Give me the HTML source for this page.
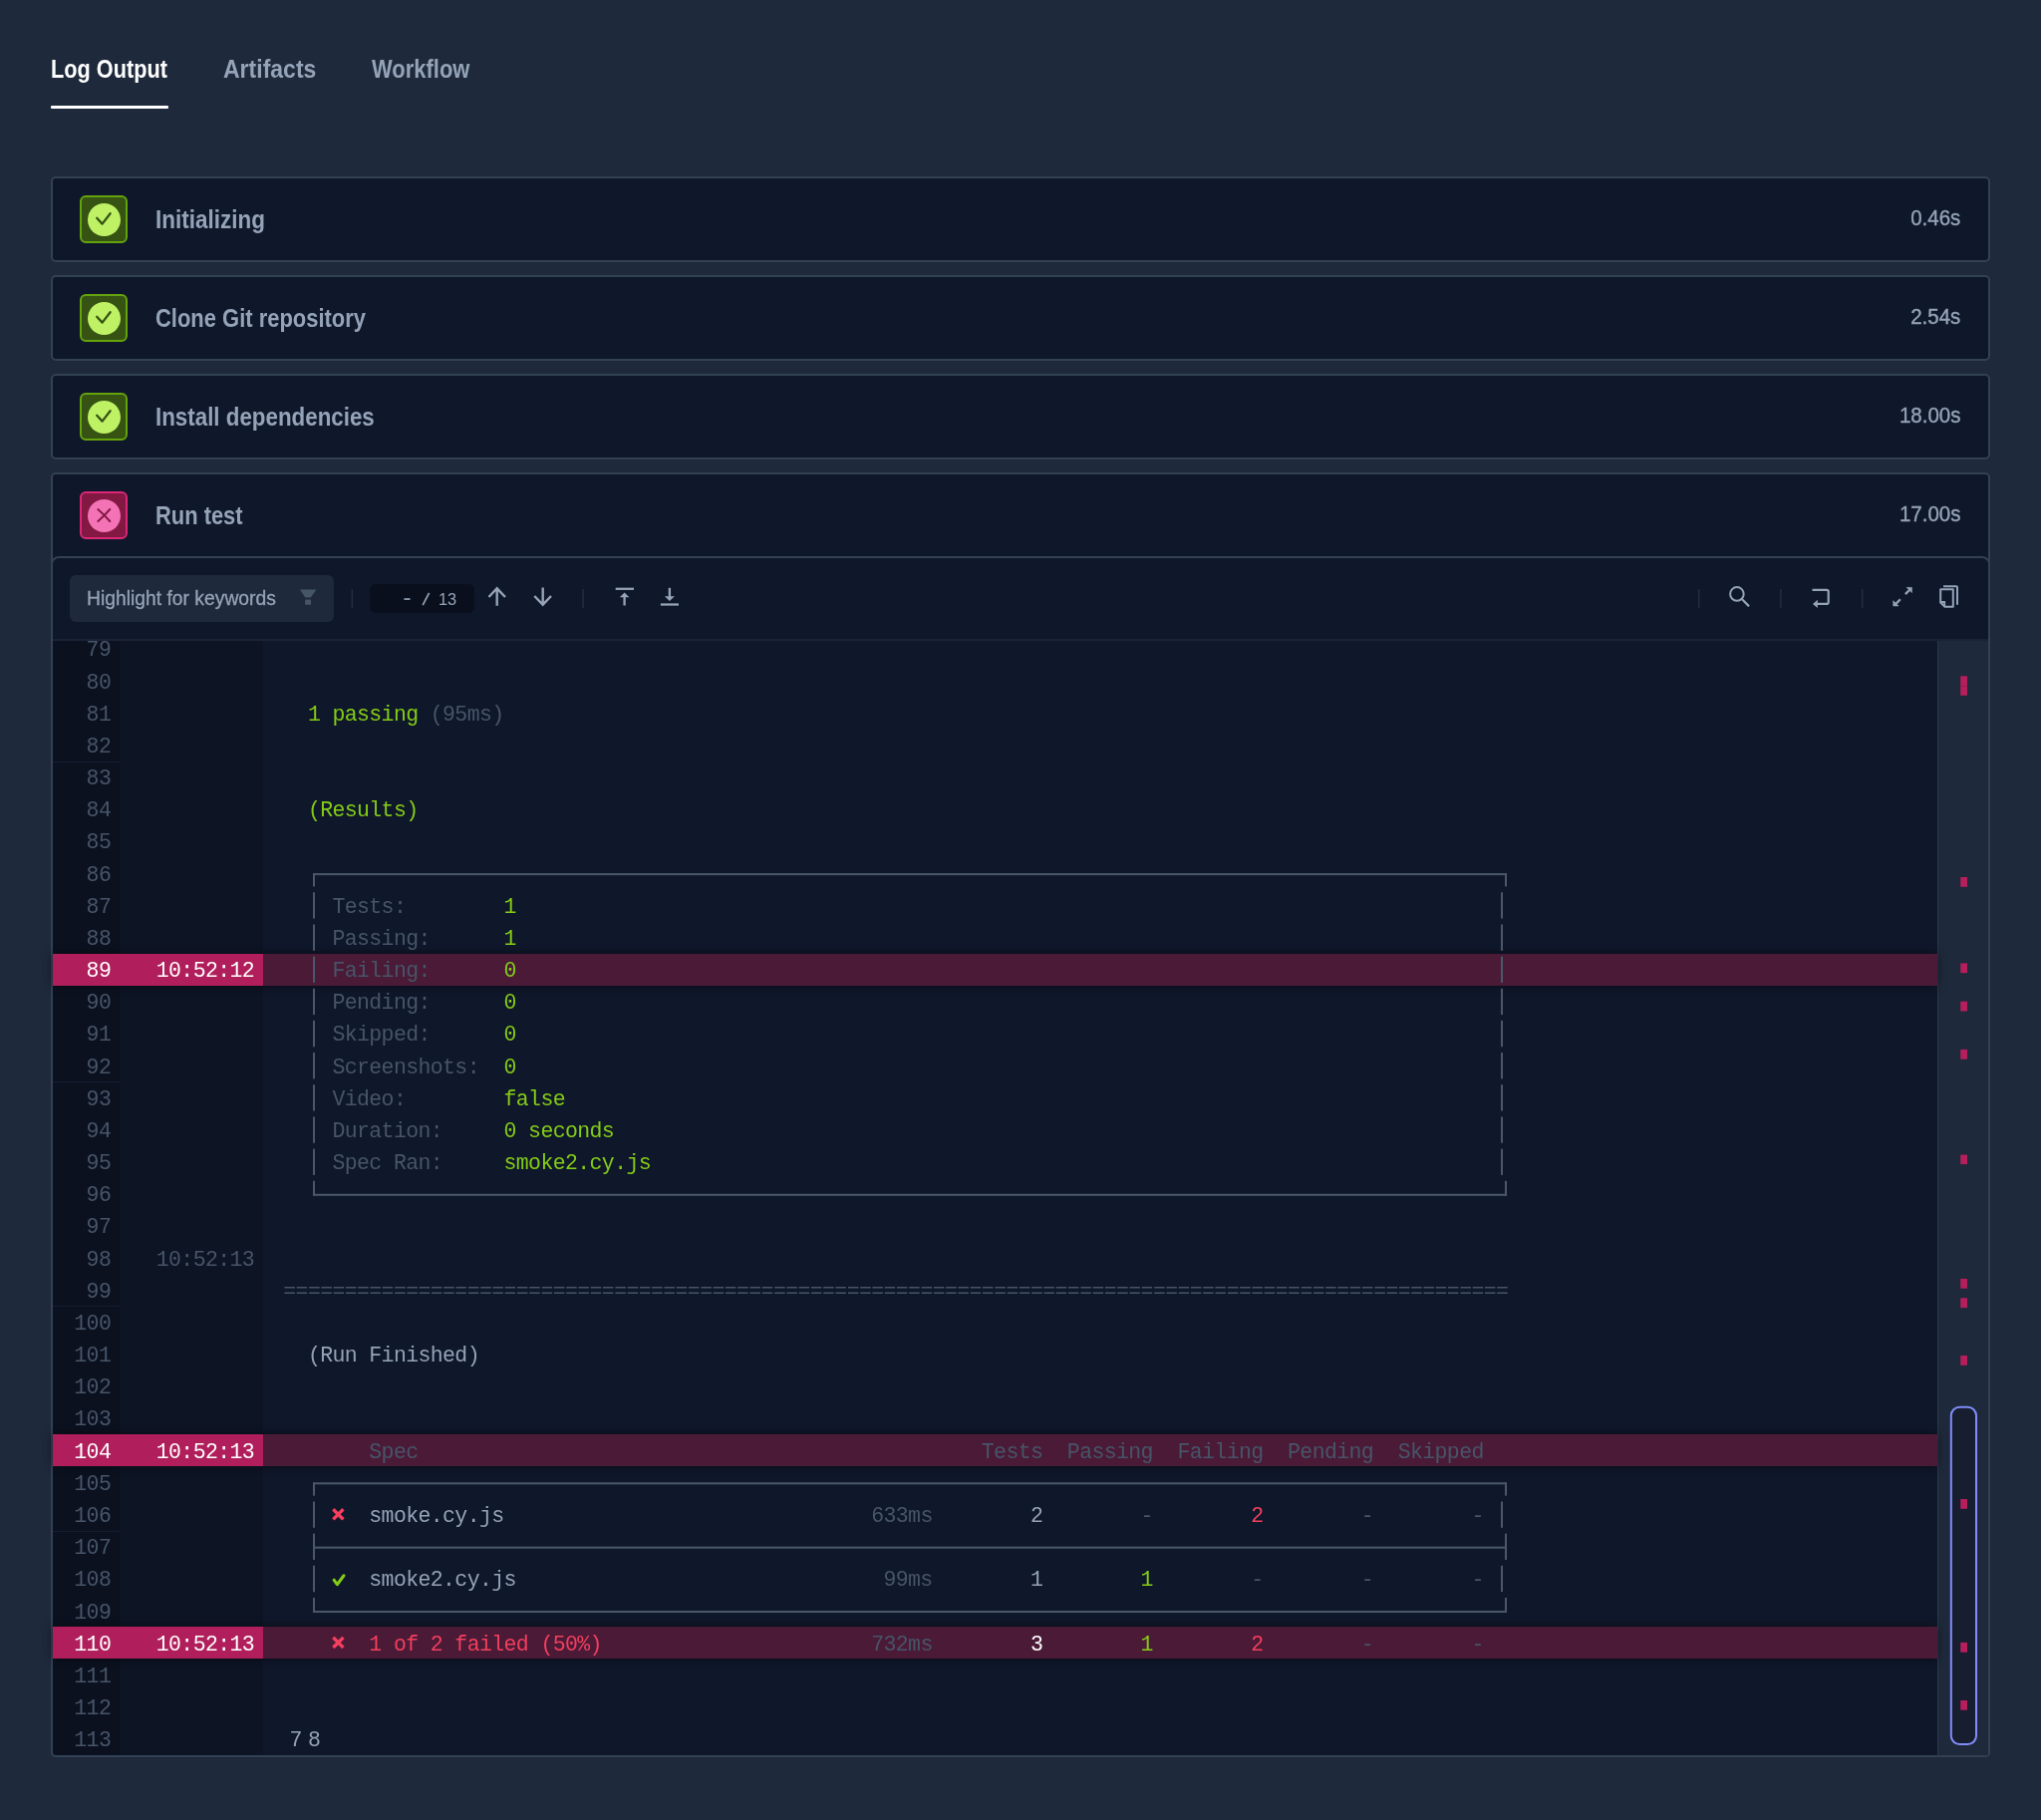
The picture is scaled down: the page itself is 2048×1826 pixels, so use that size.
<!DOCTYPE html>
<html><head><meta charset="utf-8"><title>Log Output</title>
<style>
*{box-sizing:border-box;margin:0;padding:0}
html,body{width:2048px;height:1826px;overflow:hidden;background:#1e293b}
body{position:relative;font-family:"Liberation Sans",sans-serif}
.a{position:absolute}
.tab{position:absolute;top:54px;font-weight:bold;font-size:26px;line-height:30px;white-space:nowrap;transform-origin:0 0}
.panel{position:absolute;left:51px;width:1946px;background:#0f172a;border:2px solid #334155;border-radius:5px}
.ibox{position:absolute;left:27px;top:17px;width:48px;height:48px;border-radius:6px;border:2px solid}
.ok{background:#365314;border-color:#65a30d}
.ok .circ{background:#bef264}
.bad{background:#831843;border-color:#db2777}
.bad .circ{background:#f472b6}
.circ{position:absolute;left:5.7px;top:5.5px;width:33px;height:33px;border-radius:50%}
.title{position:absolute;left:103px;font-weight:bold;font-size:25.4px;line-height:30px;color:#94a3b8;white-space:nowrap;transform-origin:0 0}
.dur{position:absolute;right:27.5px;font-size:21.8px;line-height:26px;color:#94a3b8;-webkit-text-stroke:0.4px #94a3b8;white-space:nowrap;transform-origin:100% 0}
.m{position:absolute;white-space:pre;font-family:"Liberation Mono",monospace;font-size:21.5px;line-height:32.17px;letter-spacing:-0.6119px}
.num{position:absolute;white-space:pre;font-family:"Liberation Mono",monospace;font-size:21.5px;line-height:32.17px;letter-spacing:-0.6119px;text-align:right}
</style></head>
<body>
<div style="position:absolute;left:0;top:0;width:2048px;height:1826px;will-change:transform">
<div class="tab" style="left:51px;color:#ffffff;transform:scaleX(0.835)">Log Output</div>
<div class="a" style="left:51px;top:106px;width:118px;height:3px;background:#ffffff;border-radius:1px"></div>
<div class="tab" style="left:224px;color:#94a3b8;transform:scaleX(0.885)">Artifacts</div>
<div class="tab" style="left:372.5px;color:#94a3b8;transform:scaleX(0.845)">Workflow</div>
<div class="panel" style="top:177px;height:86px">
<div class="ibox ok"><div class="circ"></div><svg class="a" style="left:0;top:0" width="44" height="44" viewBox="0 0 44 44"><path d="M15.2 20.8 L20.6 26.6 L28.6 16.2" fill="none" stroke="#365314" stroke-width="2.3" stroke-linecap="round" stroke-linejoin="round"/></svg></div>
<div class="title" style="top:26px;transform:scaleX(0.885)">Initializing</div>
<div class="dur" style="top:27px;transform:scaleX(0.94)">0.46s</div>
</div>
<div class="panel" style="top:276px;height:86px">
<div class="ibox ok"><div class="circ"></div><svg class="a" style="left:0;top:0" width="44" height="44" viewBox="0 0 44 44"><path d="M15.2 20.8 L20.6 26.6 L28.6 16.2" fill="none" stroke="#365314" stroke-width="2.3" stroke-linecap="round" stroke-linejoin="round"/></svg></div>
<div class="title" style="top:26px;transform:scaleX(0.8645)">Clone Git repository</div>
<div class="dur" style="top:27px;transform:scaleX(0.94)">2.54s</div>
</div>
<div class="panel" style="top:375px;height:86px">
<div class="ibox ok"><div class="circ"></div><svg class="a" style="left:0;top:0" width="44" height="44" viewBox="0 0 44 44"><path d="M15.2 20.8 L20.6 26.6 L28.6 16.2" fill="none" stroke="#365314" stroke-width="2.3" stroke-linecap="round" stroke-linejoin="round"/></svg></div>
<div class="title" style="top:26px;transform:scaleX(0.88)">Install dependencies</div>
<div class="dur" style="top:27px;transform:scaleX(0.94)">18.00s</div>
</div>
<div class="panel" style="top:474px;height:1289px">
<div class="ibox bad"><div class="circ"></div><svg class="a" style="left:0;top:0" width="44" height="44" viewBox="0 0 44 44"><path d="M16.3 16 Q22.3 21.2 28.3 28 M28.3 16 Q22.3 22.8 16.3 28" fill="none" stroke="#831843" stroke-width="1.9" stroke-linecap="round"/></svg></div>
<div class="title" style="top:26px;transform:scaleX(0.862)">Run test</div>
<div class="dur" style="top:27px;transform:scaleX(0.94)">17.00s</div>
</div>
<div class="a" style="left:51px;top:558px;width:1946px;height:1205px;border:2px solid #334155;border-radius:8px 8px 5px 5px;background:#0f172a;overflow:hidden">
</div>
<div class="a" style="left:53px;top:641px;width:1942px;height:2px;background:#1a2335"></div>
<div class="a" style="left:53px;top:643px;width:67px;height:1118px;background:#0b111f;border-radius:0 0 0 4px"></div>
<div class="a" style="left:120px;top:643px;width:144px;height:1118px;background:#0d1424"></div>
<div class="a" style="left:1944px;top:643px;width:51px;height:1118px;background:#1e293b;border-left:1px solid #2b3649;border-radius:0 0 4px 0"></div>
<div class="a" style="left:53px;top:763.58px;width:67px;height:1px;background:#161d31"></div>
<div class="a" style="left:53px;top:1085.28px;width:67px;height:1px;background:#161d31"></div>
<div class="a" style="left:53px;top:1310.47px;width:67px;height:1px;background:#161d31"></div>
<div class="a" style="left:53px;top:1535.66px;width:67px;height:1px;background:#161d31"></div>
<div class="a" style="left:53px;top:956.60px;width:1891px;height:32.17px;background:#4a1a37;box-shadow:0 0 10px rgba(0,0,0,0.5)"></div>
<div class="a" style="left:53px;top:1439.15px;width:1891px;height:32.17px;background:#4a1a37;box-shadow:0 0 10px rgba(0,0,0,0.5)"></div>
<div class="a" style="left:53px;top:1632.17px;width:1891px;height:32.17px;background:#4a1a37;box-shadow:0 0 10px rgba(0,0,0,0.5)"></div>
<div class="a" style="left:53px;top:956.60px;width:211px;height:32.17px;background:#b01f5b"></div>
<div class="a" style="left:264px;top:956.60px;width:1680px;height:32.17px;background:#4a1a37"></div>
<div class="a" style="left:53px;top:1439.15px;width:211px;height:32.17px;background:#b01f5b"></div>
<div class="a" style="left:264px;top:1439.15px;width:1680px;height:32.17px;background:#4a1a37"></div>
<div class="a" style="left:53px;top:1632.17px;width:211px;height:32.17px;background:#b01f5b"></div>
<div class="a" style="left:264px;top:1632.17px;width:1680px;height:32.17px;background:#4a1a37"></div>
<div class="a" style="left:53px;top:642px;width:1891px;height:1119px;overflow:hidden;will-change:transform">
<div class="num" style="left:0px;width:58.20px;top:-5.60px;color:#475569">79</div>
<div class="num" style="left:0px;width:58.20px;top:26.57px;color:#475569">80</div>
<div class="num" style="left:0px;width:58.20px;top:58.74px;color:#475569">81</div>
<div class="num" style="left:0px;width:58.20px;top:90.91px;color:#475569">82</div>
<div class="num" style="left:0px;width:58.20px;top:123.08px;color:#475569">83</div>
<div class="num" style="left:0px;width:58.20px;top:155.25px;color:#475569">84</div>
<div class="num" style="left:0px;width:58.20px;top:187.42px;color:#475569">85</div>
<div class="num" style="left:0px;width:58.20px;top:219.59px;color:#475569">86</div>
<div class="num" style="left:0px;width:58.20px;top:251.76px;color:#475569">87</div>
<div class="num" style="left:0px;width:58.20px;top:283.93px;color:#475569">88</div>
<div class="num" style="left:0px;width:58.20px;top:316.10px;color:#ffffff">89</div>
<div class="num" style="left:0px;width:58.20px;top:348.27px;color:#475569">90</div>
<div class="num" style="left:0px;width:58.20px;top:380.44px;color:#475569">91</div>
<div class="num" style="left:0px;width:58.20px;top:412.61px;color:#475569">92</div>
<div class="num" style="left:0px;width:58.20px;top:444.78px;color:#475569">93</div>
<div class="num" style="left:0px;width:58.20px;top:476.95px;color:#475569">94</div>
<div class="num" style="left:0px;width:58.20px;top:509.12px;color:#475569">95</div>
<div class="num" style="left:0px;width:58.20px;top:541.29px;color:#475569">96</div>
<div class="num" style="left:0px;width:58.20px;top:573.46px;color:#475569">97</div>
<div class="num" style="left:0px;width:58.20px;top:605.63px;color:#475569">98</div>
<div class="num" style="left:0px;width:58.20px;top:637.80px;color:#475569">99</div>
<div class="num" style="left:0px;width:58.20px;top:669.97px;color:#475569">100</div>
<div class="num" style="left:0px;width:58.20px;top:702.14px;color:#475569">101</div>
<div class="num" style="left:0px;width:58.20px;top:734.31px;color:#475569">102</div>
<div class="num" style="left:0px;width:58.20px;top:766.48px;color:#475569">103</div>
<div class="num" style="left:0px;width:58.20px;top:798.65px;color:#ffffff">104</div>
<div class="num" style="left:0px;width:58.20px;top:830.82px;color:#475569">105</div>
<div class="num" style="left:0px;width:58.20px;top:862.99px;color:#475569">106</div>
<div class="num" style="left:0px;width:58.20px;top:895.16px;color:#475569">107</div>
<div class="num" style="left:0px;width:58.20px;top:927.33px;color:#475569">108</div>
<div class="num" style="left:0px;width:58.20px;top:959.50px;color:#475569">109</div>
<div class="num" style="left:0px;width:58.20px;top:991.67px;color:#ffffff">110</div>
<div class="num" style="left:0px;width:58.20px;top:1023.84px;color:#475569">111</div>
<div class="num" style="left:0px;width:58.20px;top:1056.01px;color:#475569">112</div>
<div class="num" style="left:0px;width:58.20px;top:1088.18px;color:#475569">113</div>
<div class="num" style="left:0px;width:202.10px;top:316.10px;color:#ffffff">10:52:12</div>
<div class="num" style="left:0px;width:202.10px;top:605.63px;color:#475569">10:52:13</div>
<div class="num" style="left:0px;width:202.10px;top:798.65px;color:#ffffff">10:52:13</div>
<div class="num" style="left:0px;width:202.10px;top:991.67px;color:#ffffff">10:52:13</div>
<div class="m" style="left:255.88px;top:58.74px;color:#84cc16">1 passing</div>
<div class="m" style="left:378.78px;top:58.74px;color:#475569">(95ms)</div>
<div class="m" style="left:255.88px;top:155.25px;color:#84cc16">(Results)</div>
<div class="m" style="left:280.46px;top:251.76px;color:#475569">Tests:</div>
<div class="m" style="left:452.52px;top:251.76px;color:#84cc16">1</div>
<div class="m" style="left:280.46px;top:283.93px;color:#475569">Passing:</div>
<div class="m" style="left:452.52px;top:283.93px;color:#84cc16">1</div>
<div class="m" style="left:280.46px;top:316.10px;color:#475569">Failing:</div>
<div class="m" style="left:452.52px;top:316.10px;color:#84cc16">0</div>
<div class="m" style="left:280.46px;top:348.27px;color:#475569">Pending:</div>
<div class="m" style="left:452.52px;top:348.27px;color:#84cc16">0</div>
<div class="m" style="left:280.46px;top:380.44px;color:#475569">Skipped:</div>
<div class="m" style="left:452.52px;top:380.44px;color:#84cc16">0</div>
<div class="m" style="left:280.46px;top:412.61px;color:#475569">Screenshots:</div>
<div class="m" style="left:452.52px;top:412.61px;color:#84cc16">0</div>
<div class="m" style="left:280.46px;top:444.78px;color:#475569">Video:</div>
<div class="m" style="left:452.52px;top:444.78px;color:#84cc16">false</div>
<div class="m" style="left:280.46px;top:476.95px;color:#475569">Duration:</div>
<div class="m" style="left:452.52px;top:476.95px;color:#84cc16">0 seconds</div>
<div class="m" style="left:280.46px;top:509.12px;color:#475569">Spec Ran:</div>
<div class="m" style="left:452.52px;top:509.12px;color:#84cc16">smoke2.cy.js</div>
<div class="m" style="left:231.30px;top:637.80px;color:#475569">====================================================================================================</div>
<div class="m" style="left:255.88px;top:702.14px;color:#94a3b8">(Run Finished)</div>
<div class="m" style="left:317.33px;top:798.65px;color:#475569">Spec</div>
<div class="m" style="left:931.83px;top:798.65px;color:#475569">Tests</div>
<div class="m" style="left:1017.86px;top:798.65px;color:#475569">Passing</div>
<div class="m" style="left:1128.47px;top:798.65px;color:#475569">Failing</div>
<div class="m" style="left:1239.08px;top:798.65px;color:#475569">Pending</div>
<div class="m" style="left:1349.69px;top:798.65px;color:#475569">Skipped</div>
<div class="m" style="left:317.33px;top:862.99px;color:#94a3b8">smoke.cy.js</div>
<div class="m" style="left:821.22px;top:862.99px;color:#475569">633ms</div>
<div class="m" style="left:980.99px;top:862.99px;color:#94a3b8">2</div>
<div class="m" style="left:1091.60px;top:862.99px;color:#475569">-</div>
<div class="m" style="left:1202.21px;top:862.99px;color:#f43f5e">2</div>
<div class="m" style="left:1312.82px;top:862.99px;color:#475569">-</div>
<div class="m" style="left:1423.43px;top:862.99px;color:#475569">-</div>
<div class="m" style="left:317.33px;top:927.33px;color:#94a3b8">smoke2.cy.js</div>
<div class="m" style="left:833.51px;top:927.33px;color:#475569">99ms</div>
<div class="m" style="left:980.99px;top:927.33px;color:#94a3b8">1</div>
<div class="m" style="left:1091.60px;top:927.33px;color:#84cc16">1</div>
<div class="m" style="left:1202.21px;top:927.33px;color:#475569">-</div>
<div class="m" style="left:1312.82px;top:927.33px;color:#475569">-</div>
<div class="m" style="left:1423.43px;top:927.33px;color:#475569">-</div>
<div class="m" style="left:317.33px;top:991.67px;color:#f43f5e">1 of 2 failed (50%)</div>
<div class="m" style="left:821.22px;top:991.67px;color:#475569">732ms</div>
<div class="m" style="left:980.99px;top:991.67px;color:#ffffff">3</div>
<div class="m" style="left:1091.60px;top:991.67px;color:#84cc16">1</div>
<div class="m" style="left:1202.21px;top:991.67px;color:#f43f5e">2</div>
<div class="m" style="left:1312.82px;top:991.67px;color:#475569">-</div>
<div class="m" style="left:1423.43px;top:991.67px;color:#475569">-</div>
<div class="m" style="left:237.50px;top:1088.18px;color:#94a3b8">7</div>
<div class="m" style="left:256.00px;top:1088.18px;color:#94a3b8">8</div>
</div>
<div class="a" style="left:70px;top:577px;width:265px;height:47px;background:#1e293b;border-radius:6px"></div>
<div class="a" style="left:87px;top:588px;font-size:20px;line-height:24px;color:#94a3b8;-webkit-text-stroke:0.3px #94a3b8;white-space:nowrap;transform:scaleX(0.965);transform-origin:0 0">Highlight for keywords</div>
<div class="a" style="left:371px;top:585.5px;width:105px;height:29px;background:#0a0f1d;border-radius:6px"></div>
<div class="a" style="left:440px;top:592px;font-size:16.4px;line-height:18px;color:#94a3b8;white-space:pre">13</div>
<svg class="a" style="left:0;top:0" width="2048" height="1826" viewBox="0 0 2048 1826"><rect x="314.00" y="876.09" width="1198.00" height="2.00" fill="#4b586c"/><rect x="314.00" y="876.09" width="2.00" height="13.30" fill="#4b586c"/><rect x="1510.00" y="876.09" width="2.00" height="13.30" fill="#4b586c"/><rect x="314.00" y="895.26" width="2.00" height="26.30" fill="#4b586c"/><rect x="1506.00" y="895.26" width="2.00" height="26.30" fill="#4b586c"/><rect x="314.00" y="927.43" width="2.00" height="26.30" fill="#4b586c"/><rect x="1506.00" y="927.43" width="2.00" height="26.30" fill="#4b586c"/><rect x="314.00" y="959.60" width="2.00" height="26.30" fill="#4b586c"/><rect x="1506.00" y="959.60" width="2.00" height="26.30" fill="#4b586c"/><rect x="314.00" y="991.77" width="2.00" height="26.30" fill="#4b586c"/><rect x="1506.00" y="991.77" width="2.00" height="26.30" fill="#4b586c"/><rect x="314.00" y="1023.94" width="2.00" height="26.30" fill="#4b586c"/><rect x="1506.00" y="1023.94" width="2.00" height="26.30" fill="#4b586c"/><rect x="314.00" y="1056.11" width="2.00" height="26.30" fill="#4b586c"/><rect x="1506.00" y="1056.11" width="2.00" height="26.30" fill="#4b586c"/><rect x="314.00" y="1088.28" width="2.00" height="26.30" fill="#4b586c"/><rect x="1506.00" y="1088.28" width="2.00" height="26.30" fill="#4b586c"/><rect x="314.00" y="1120.45" width="2.00" height="26.30" fill="#4b586c"/><rect x="1506.00" y="1120.45" width="2.00" height="26.30" fill="#4b586c"/><rect x="314.00" y="1152.62" width="2.00" height="26.30" fill="#4b586c"/><rect x="1506.00" y="1152.62" width="2.00" height="26.30" fill="#4b586c"/><rect x="314.00" y="1184.79" width="2.00" height="15.00" fill="#4b586c"/><rect x="1510.00" y="1184.79" width="2.00" height="15.00" fill="#4b586c"/><rect x="314.00" y="1197.79" width="1198.00" height="2.00" fill="#4b586c"/><rect x="314.00" y="1487.32" width="1198.00" height="2.00" fill="#4b586c"/><rect x="314.00" y="1487.32" width="2.00" height="13.30" fill="#4b586c"/><rect x="1510.00" y="1487.32" width="2.00" height="13.30" fill="#4b586c"/><rect x="314.00" y="1506.49" width="2.00" height="26.30" fill="#4b586c"/><rect x="1506.00" y="1506.49" width="2.00" height="26.30" fill="#4b586c"/><rect x="314.00" y="1538.66" width="2.00" height="26.30" fill="#4b586c"/><rect x="1510.00" y="1538.66" width="2.00" height="26.30" fill="#4b586c"/><rect x="314.00" y="1551.66" width="1198.00" height="2.00" fill="#4b586c"/><rect x="314.00" y="1570.83" width="2.00" height="26.30" fill="#4b586c"/><rect x="1506.00" y="1570.83" width="2.00" height="26.30" fill="#4b586c"/><rect x="314.00" y="1603.00" width="2.00" height="15.00" fill="#4b586c"/><rect x="1510.00" y="1603.00" width="2.00" height="15.00" fill="#4b586c"/><rect x="314.00" y="1616.00" width="1198.00" height="2.00" fill="#4b586c"/><path d="M335.50 1515.39 L343.30 1523.19 M343.30 1515.39 L335.50 1523.19" stroke="#f43f5e" stroke-width="3.4" stroke-linecap="square"/><path d="M335.1 1585.13 L338.3 1589.73 L345 1580.73" fill="none" stroke="#84cc16" stroke-width="3" stroke-linecap="round" stroke-linejoin="round"/><path d="M335.50 1644.07 L343.30 1651.87 M343.30 1644.07 L335.50 1651.87" stroke="#f43f5e" stroke-width="3.4" stroke-linecap="square"/><rect x="1957.8" y="1411.8" width="25.2" height="338.2" rx="8.5" ry="8.5" fill="#161e2f"/><rect x="1967.20" y="678.30" width="6.80" height="19.50" fill="#b41f5c"/><rect x="1967.20" y="880.00" width="6.80" height="9.80" fill="#b41f5c"/><rect x="1967.20" y="966.40" width="6.80" height="9.80" fill="#b41f5c"/><rect x="1967.20" y="1004.70" width="6.80" height="9.80" fill="#b41f5c"/><rect x="1967.20" y="1052.90" width="6.80" height="9.80" fill="#b41f5c"/><rect x="1967.20" y="1158.60" width="6.80" height="9.50" fill="#b41f5c"/><rect x="1967.20" y="1282.90" width="6.80" height="9.80" fill="#b41f5c"/><rect x="1967.20" y="1302.30" width="6.80" height="9.80" fill="#b41f5c"/><rect x="1967.20" y="1360.00" width="6.80" height="9.80" fill="#b41f5c"/><rect x="1967.20" y="1504.00" width="6.80" height="9.80" fill="#b41f5c"/><rect x="1967.20" y="1647.90" width="6.80" height="9.80" fill="#b41f5c"/><rect x="1967.20" y="1706.00" width="6.80" height="9.70" fill="#b41f5c"/><rect x="1967.20" y="688.20" width="6.80" height="0.80" fill="#8a1f4f"/><rect x="1957.8" y="1411.8" width="25.2" height="338.2" rx="8.5" ry="8.5" fill="none" stroke="#818cf8" stroke-width="2"/><path d="M490.5 599 L498.7 590.3 L507 599 M498.7 590.3 V607.8" fill="none" stroke="#94a3b8" stroke-width="2.4"/><path d="M536.3 598 L544.7 606.7 L553 598 M544.7 589.4 V606.7" fill="none" stroke="#94a3b8" stroke-width="2.4"/><line x1="617.7" y1="590.8" x2="636" y2="590.8" stroke="#94a3b8" stroke-width="2.3" stroke-linecap="butt"/><path d="M626.6 594.5 L621.8 599.2 L631.4 599.2 Z" fill="#94a3b8"/><line x1="626.6" y1="598" x2="626.6" y2="607.5" stroke="#94a3b8" stroke-width="2.3" stroke-linecap="butt"/><line x1="671.9" y1="589.8" x2="671.9" y2="600" stroke="#94a3b8" stroke-width="2.3" stroke-linecap="butt"/><path d="M671.9 603 L666.9 598.2 L676.9 598.2 Z" fill="#94a3b8"/><line x1="662.9" y1="606.5" x2="681" y2="606.5" stroke="#94a3b8" stroke-width="2.3" stroke-linecap="butt"/><rect x="352.60" y="591.00" width="1.30" height="19.00" fill="#263143"/><rect x="584.40" y="591.00" width="1.30" height="19.00" fill="#263143"/><rect x="1704.10" y="591.00" width="1.30" height="19.00" fill="#263143"/><rect x="1786.20" y="591.00" width="1.30" height="19.00" fill="#263143"/><rect x="1868.10" y="591.00" width="1.30" height="19.00" fill="#263143"/><circle cx="1742.9" cy="595.9" r="6.8" fill="none" stroke="#94a3b8" stroke-width="2"/><line x1="1747.8" y1="601" x2="1754.4" y2="607.6" stroke="#94a3b8" stroke-width="2.2" stroke-linecap="round"/><path d="M1818.5 591.8 H1832.7 Q1834.7 591.8 1834.7 593.8 V603.9 Q1834.7 605.9 1832.7 605.9 H1822" fill="none" stroke="#94a3b8" stroke-width="2.2"/><path d="M1819 605.9 L1823.8 601.8 L1823.8 610 Z" fill="#94a3b8"/><line x1="1911.9" y1="596.1" x2="1916.2" y2="591.8" stroke="#94a3b8" stroke-width="2.3" stroke-linecap="butt"/><path d="M1918.4 589.4 L1913.2 589.4 L1918.4 594.6 Z" fill="#94a3b8" stroke="#94a3b8" stroke-width="0.7" stroke-linejoin="round"/><line x1="1906.9" y1="601.3" x2="1902.6" y2="605.6" stroke="#94a3b8" stroke-width="2.3" stroke-linecap="butt"/><path d="M1899.8 607.9 L1899.8 602.7 L1905.0 607.9 Z" fill="#94a3b8" stroke="#94a3b8" stroke-width="0.7" stroke-linejoin="round"/><path d="M1950 588.2 H1963 Q1964 588.2 1964 589.2 V606.8" fill="none" stroke="#94a3b8" stroke-width="2"/><path d="M1947.2 591.2 H1959.8 V608.8 H1951.5 L1947.2 604.5 Z" fill="none" stroke="#94a3b8" stroke-width="2" stroke-linejoin="round"/><path d="M1947.2 604 H1951.2 V608.5" fill="none" stroke="#94a3b8" stroke-width="1.8"/><rect x="405.50" y="600.20" width="6.00" height="1.70" fill="#94a3b8"/><line x1="424.2" y1="607.2" x2="430.6" y2="594.8" stroke="#94a3b8" stroke-width="1.7" stroke-linecap="butt"/><path d="M300.8 591.5 H317.4 L311.8 599.6 H306.4 Z" fill="#475569"/><rect x="306.20" y="601.60" width="5.80" height="5.10" fill="#475569"/></svg>
</div>
</body></html>
